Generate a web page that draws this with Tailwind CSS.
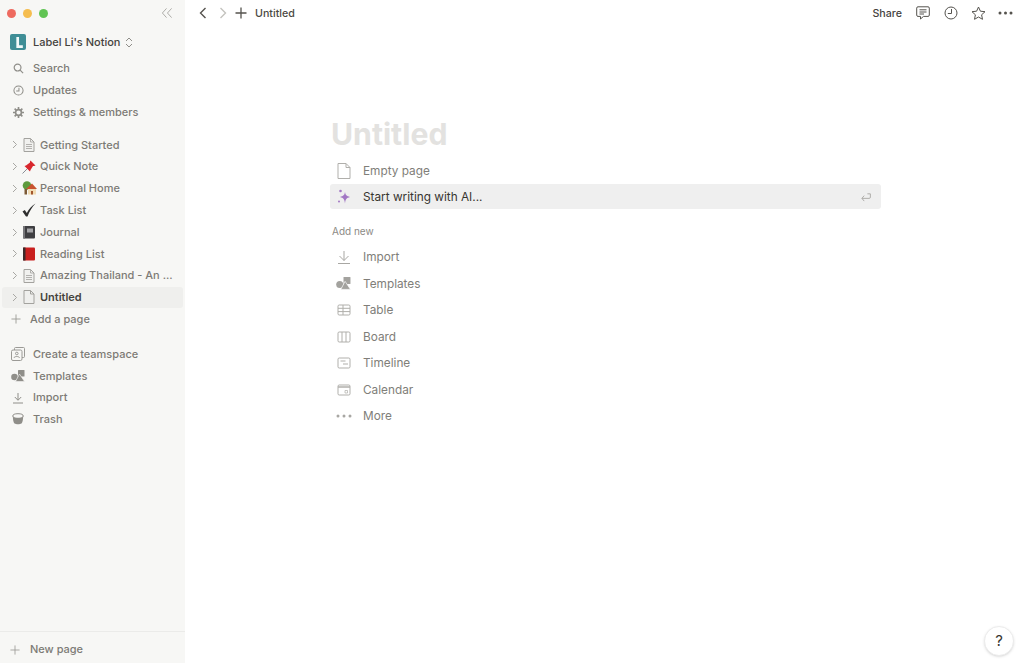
<!DOCTYPE html>
<html><head><meta charset="utf-8"><script src="https://cdn.jsdelivr.net/npm/@tailwindcss/browser@4"></script></head>
<body class="w-[1024px] h-[663px] overflow-hidden bg-white font-['Inter','Liberation_Sans',sans-serif]">
<div class="flex h-[663px] relative">
<aside class="w-[185px] shrink-0 h-full bg-[#f7f7f5] flex flex-col text-[11px] text-[#7d7b75] font-medium">
  <div class="h-[26px] flex items-center pl-[7px] pr-[12px]">
    <span class="w-[9px] h-[9px] rounded-full bg-[#ee6a5f]"></span>
    <span class="w-[9px] h-[9px] rounded-full bg-[#f5bd4f] ml-[7px]"></span>
    <span class="w-[9px] h-[9px] rounded-full bg-[#61c454] ml-[7px]"></span>
    <svg class="ml-auto" width="12" height="12" viewBox="0 0 13 12" fill="none" stroke="#a8a7a3" stroke-width="1"><path d="M6 1 1.500 6 6 11M11.500 1 7 6l4.500 5"/></svg>
  </div>
  <div class="h-[32px] flex items-center pl-[10px] text-[#37352f]">
    <span class="w-[16px] h-[16px] rounded-[2px] bg-[#3f8e96] flex items-center justify-center"><svg width="11" height="13" viewBox="0 0 10 12"><path d="M3 1h2.500v7.500H9V11H3z" fill="#f2fafa"/></svg></span>
    <span class="ml-[7px] text-[11px] font-medium text-[#45433e]">Label Li's Notion</span>
    <svg class="ml-[5px]" width="8" height="11" viewBox="0 0 8 11" fill="none" stroke="#8f8e89"><path d="M1 4l3-3 3 3M1 7l3 3 3-3"/></svg>
  </div>
  <div class="flex flex-col mt-[-1px]">
    <div class="h-[22px] flex items-center pl-[13px] gap-[9px]"><svg class="w-[11px]" height="11" viewBox="0 0 12 12" fill="none" stroke="#8f8e89" stroke-width="1.300"><circle cx="5" cy="5" r="3.700"/><path d="M7.800 7.800 11 11"/></svg><span>Search</span></div>
    <div class="h-[22px] flex items-center pl-[13px] gap-[9px]"><svg class="w-[11px]" height="11" viewBox="0 0 12 12" fill="none" stroke="#8f8e89" stroke-width="1.100"><circle cx="6" cy="6" r="5"/><path d="M6.500 3v3.500H3.500"/></svg><span>Updates</span></div>
    <div class="h-[22px] flex items-center pl-[13px] gap-[9px]"><svg class="w-[11px]" height="11" viewBox="0 0 12 12" fill="none" stroke="#8f8e89"><circle cx="6" cy="6" r="3.200" stroke-width="1.800"/><path stroke-width="1.800" d="M6 0v2.500M6 9.500V12M0 6h2.500M9.500 6H12M1.800 1.800l1.800 1.800M8.400 8.400l1.800 1.800M1.800 10.200l1.800-1.800M8.400 3.600l1.800-1.800"/></svg><span>Settings &amp; members</span></div>
  </div>
  <div class="flex flex-col mt-[11px] px-[2px]">
    <div class="h-[21.800px] flex items-center pl-[10px]"><svg width="6" height="9" viewBox="0 0 6 9" fill="none" stroke="#a8a7a3"><path d="M1 1l3.500 3.500L1 8"/></svg><svg class="ml-[5px]" width="12" height="14" viewBox="0 0 12 14" fill="#f1f1ef" stroke="#a3a29e"><path d="M1 .5h6.500L11 4v9.500H1z"/><path d="M7.500.5V4H11M3 6.500h6M3 8.500h6M3 10.500h6" fill="none" stroke-width=".8"/></svg><span class="ml-[5px]">Getting Started</span></div>
    <div class="h-[21.800px] flex items-center pl-[10px]"><svg width="6" height="9" viewBox="0 0 6 9" fill="none" stroke="#a8a7a3"><path d="M1 1l3.500 3.500L1 8"/></svg><svg class="ml-[4px]" width="14" height="14" viewBox="0 0 14 14"><path d="M.5 13.500 6 8" stroke="#8a8f96" stroke-width="1"/><path d="M8.500 .5l5 5-1.500.6-1 0L8.500 10 8 11.500 2.500 6 4 5.500 8 2.500l0-1z" fill="#d8272d"/></svg><span class="ml-[4px]">Quick Note</span></div>
    <div class="h-[21.800px] flex items-center pl-[10px]"><svg width="6" height="9" viewBox="0 0 6 9" fill="none" stroke="#a8a7a3"><path d="M1 1l3.500 3.500L1 8"/></svg><svg class="ml-[4px]" width="15" height="14" viewBox="0 0 15 14"><circle cx="5" cy="4.500" r="4.300" fill="#5d9a3c"/><rect x="2.500" y="8" width="2.500" height="5.500" fill="#7c5a36"/><rect x="6" y="7" width="8" height="6.500" fill="#f1dcb5"/><path d="M4 8l6-5.500L15 8z" fill="#c8532f"/><rect x="9" y="10" width="2" height="3.500" fill="#a3562d"/></svg><span class="ml-[3px]">Personal Home</span></div>
    <div class="h-[21.800px] flex items-center pl-[10px]"><svg width="6" height="9" viewBox="0 0 6 9" fill="none" stroke="#a8a7a3"><path d="M1 1l3.500 3.500L1 8"/></svg><svg class="ml-[4px]" width="14" height="14" viewBox="0 0 14 14"><path d="M.5 8.500 2.800 7 4.800 10C6.800 6 9.500 3 13.500 .5 10 4 7.500 8.500 5.500 13.500H4z" fill="#2e2e2e"/></svg><span class="ml-[4px]">Task List</span></div>
    <div class="h-[21.800px] flex items-center pl-[10px]"><svg width="6" height="9" viewBox="0 0 6 9" fill="none" stroke="#a8a7a3"><path d="M1 1l3.500 3.500L1 8"/></svg><svg class="ml-[4px]" width="14" height="14" viewBox="0 0 14 14"><rect x="1" y="1" width="12" height="12.500" rx="1" fill="#3f3f42"/><rect x="1" y="1" width="2" height="12.500" fill="#77777a"/><rect x="5" y="3.500" width="6" height="4" fill="#a5a5a8"/></svg><span class="ml-[4px]">Journal</span></div>
    <div class="h-[21.800px] flex items-center pl-[10px]"><svg width="6" height="9" viewBox="0 0 6 9" fill="none" stroke="#a8a7a3"><path d="M1 1l3.500 3.500L1 8"/></svg><svg class="ml-[4px]" width="14" height="14" viewBox="0 0 14 14"><rect x="1" y=".5" width="12" height="13" rx="1" fill="#c9201f"/><rect x="1" y=".5" width="2.500" height="13" fill="#3b2a2a"/></svg><span class="ml-[4px]">Reading List</span></div>
    <div class="h-[21.800px] flex items-center pl-[10px]"><svg width="6" height="9" viewBox="0 0 6 9" fill="none" stroke="#a8a7a3"><path d="M1 1l3.500 3.500L1 8"/></svg><svg class="ml-[5px]" width="12" height="14" viewBox="0 0 12 14" fill="#f1f1ef" stroke="#a3a29e"><path d="M1 .5h6.500L11 4v9.500H1z"/><path d="M7.500.5V4H11M3 6.500h6M3 8.500h6M3 10.500h6" fill="none" stroke-width=".8"/></svg><span class="ml-[5px]">Amazing Thailand - An ...</span></div>
    <div class="h-[21.800px] flex items-center pl-[10px] bg-[#efefed] rounded-[3px] text-[#45433e] font-semibold"><svg width="6" height="9" viewBox="0 0 6 9" fill="none" stroke="#a8a7a3"><path d="M1 1l3.500 3.500L1 8"/></svg><svg class="ml-[5px]" width="12" height="14" viewBox="0 0 12 14" fill="none" stroke="#a3a29e"><path d="M1 .5h6.500L11 4v9.500H1zM7.500.5V4H11"/></svg><span class="ml-[5px]">Untitled</span></div>
    <div class="h-[21.800px] flex items-center pl-[9px]"><svg width="10" height="10" viewBox="0 0 11 11" stroke="#9b9a96"><path d="M5.500 .5v10M.5 5.500h10"/></svg><span class="ml-[9px]">Add a page</span></div>
  </div>
  <div class="flex flex-col mt-[13px]">
    <div class="h-[21.800px] flex items-center pl-[11px] gap-[8px]"><svg class="w-[14px]" height="14" viewBox="0 0 14 14" fill="none" stroke="#9b9a96"><rect x=".5" y="3" width="10.500" height="10.500" rx="1.500"/><path d="M3.500 3V1.500a1 1 0 0 1 1-1h8a1 1 0 0 1 1 1v8a1 1 0 0 1-1 1H11"/><circle cx="5.800" cy="6.500" r="1.300"/><path d="M3 11c0-2 5.500-2 5.500 0"/></svg><span>Create a teamspace</span></div>
    <div class="h-[21.800px] flex items-center pl-[11px] gap-[8px]"><svg class="w-[14px]" height="12" viewBox="0 0 14 12" fill="#8f8e89"><circle cx="3.500" cy="7" r="3.300"/><rect x="7" y="0" width="6.500" height="6.500" rx=".5"/><path d="M8.500 4 13.500 11.500H4.500z" stroke="#f7f7f5" stroke-width=".6"/></svg><span>Templates</span></div>
    <div class="h-[21.800px] flex items-center pl-[12px] gap-[9px]"><svg class="w-[12px]" height="12" viewBox="0 0 12 12" fill="none" stroke="#8f8e89"><path d="M6 1v7M2.800 5 6 8.300 9.200 5M1 11h10"/></svg><span>Import</span></div>
    <div class="h-[21.800px] flex items-center pl-[12px] gap-[9px]"><svg class="w-[12px]" height="12" viewBox="0 0 12 12"><ellipse cx="6" cy="3" rx="5.200" ry="2.300" fill="none" stroke="#8f8e89"/><path d="M.8 3.500C1 7 1.500 9.500 2.500 10.500c1.500 1 5.500 1 7 0 1-1 1.500-3.500 1.700-7-1 2-9.400 2-10.400 0z" fill="#8f8e89"/></svg><span>Trash</span></div>
  </div>
  <div class="mt-auto h-[32px] pt-[4px] border-t border-[#ebebe9] flex items-center pl-[10px]"><svg width="10" height="10" viewBox="0 0 12 12" stroke="#9b9a96"><path d="M6 .5v11M.5 6h11"/></svg><span class="ml-[10px]">New page</span></div>
</aside>
<main class="flex-1 flex flex-col min-w-0">
  <header class="h-[26px] flex items-center pl-[14px] pr-[11px] text-[10.700px] font-medium text-[#37352f] [&_span]:pt-[2px]">
    <svg width="8" height="12" viewBox="0 0 8 12" fill="none" stroke="#55534e" stroke-width="1.400"><path d="M6.500 1 1.500 6l5 5"/></svg>
    <svg class="ml-[12px]" width="8" height="12" viewBox="0 0 8 12" fill="none" stroke="#c4c3bf" stroke-width="1.400"><path d="M1.500 1l5 5-5 5"/></svg>
    <svg class="ml-[8px]" width="12" height="12" viewBox="0 0 12 12" stroke="#55534e" stroke-width="1.300"><path d="M6 .5v11M.5 6h11"/></svg>
    <span class="ml-[8px] text-[#4b4943]">Untitled</span>
    <span class="ml-auto text-[#45433e]">Share</span>
    <svg class="ml-[14px]" width="14" height="14" viewBox="0 0 14 14" fill="none" stroke="#55534e"><path d="M2 .8h10a1.300 1.300 0 0 1 1.300 1.300v7a1.300 1.300 0 0 1-1.300 1.300H7.500L4.500 13v-2.600H2A1.300 1.300 0 0 1 .7 9.100v-7A1.300 1.300 0 0 1 2 .8zM3.500 3.800h7M3.500 6h7M3.500 8h4.500"/></svg>
    <svg class="ml-[14px]" width="14" height="14" viewBox="0 0 14 14" fill="none" stroke="#55534e"><circle cx="7" cy="7" r="6"/><path d="M7.500 3v4.500H3.800"/></svg>
    <svg class="ml-[13px]" width="15" height="14" viewBox="0 0 15 14" fill="none" stroke="#55534e"><path d="M7.500 1l1.900 4.200 4.600.5-3.400 3.100.9 4.500-4-2.300-4 2.300.9-4.500L1 5.700l4.600-.5z"/></svg>
    <svg class="ml-[12px]" width="15" height="4" viewBox="0 0 15 4" fill="#55534e"><circle cx="2" cy="2" r="1.500"/><circle cx="7.500" cy="2" r="1.500"/><circle cx="13" cy="2" r="1.500"/></svg>
  </header>
  <section class="w-[551px] ml-[145px] mt-[90px] text-[11.800px] text-[#807e79] [&_span]:pt-[2px]">
    <h1 class="pl-[1px] text-[30.200px] leading-[36px] font-bold text-[#e3e2e0]">Untitled</h1>
    <div class="mt-[6px] h-[26px] flex items-center pl-[7px]"><svg class="w-[14px]" height="16" viewBox="0 0 14 16" fill="none" stroke="#b0afab"><path d="M1 .5h8L13 4.500V15.500H1zM9 .5v4h4"/></svg><span class="ml-[12px]">Empty page</span></div>
    <div class="h-[25px] flex items-center pl-[7px] pr-[10px] bg-[#efefef] rounded-[3px] text-[#37352f]"><svg class="w-[14px]" height="15" viewBox="0 0 14 15" fill="#a277c4"><path d="M8 3c.5 3 1.500 4 5 5C9.500 9 8.500 10 8 14.500 7.500 10 6.500 9 3 8 6.500 7 7.500 6 8 3z"/><circle cx="3.500" cy="2" r="1.300"/><circle cx="2" cy="12.500" r="1"/></svg><span class="ml-[12px]">Start writing with AI...</span><svg class="ml-auto" width="10" height="10" viewBox="0 0 11 10" fill="none" stroke="#a8a7a3"><path d="M3.500 3.500 1 6.500 3.500 9.500M1 6.500h8a1.300 1.300 0 0 0 1.300-1.300V1.500H7"/></svg></div>
    <div class="mt-[13px] h-[18px] pl-[2px] flex items-center text-[10px] text-[#8c8a85]">Add new</div>
    <div class="mt-[3.750px] h-[26.500px] flex items-center pl-[7px]"><svg class="w-[14px]" height="14" viewBox="0 0 14 14" fill="none" stroke="#a8a7a3"><path d="M7 1v9.500M2.500 6 7 10.500 11.500 6M1 13.500h12"/></svg><span class="ml-[12px]">Import</span></div>
    <div class="h-[26.500px] flex items-center pl-[6px]"><svg class="w-[15px]" height="13" viewBox="0 0 14 12" fill="#a3a29e"><circle cx="3.500" cy="7" r="3.300"/><rect x="7" y="0" width="6.500" height="6.500" rx=".5"/><path d="M8.500 4 13.500 11.500H4.500z" stroke="#fff" stroke-width=".6"/></svg><span class="ml-[12px]">Templates</span></div>
    <div class="h-[26.500px] flex items-center pl-[7px]"><svg class="w-[14px]" height="12" viewBox="0 0 14 12" fill="none" stroke="#b0afab"><rect x="1" y="1" width="12" height="10" rx="1.200"/><path d="M1 4.300h12M1 7.600h12M6 1v10"/></svg><span class="ml-[12px]">Table</span></div>
    <div class="h-[26.500px] flex items-center pl-[7px]"><svg class="w-[14px]" height="12" viewBox="0 0 14 12" fill="none" stroke="#b0afab"><rect x="1" y="1" width="12" height="10" rx="1.200"/><path d="M5 1v10M9 1v10"/></svg><span class="ml-[12px]">Board</span></div>
    <div class="h-[26.500px] flex items-center pl-[7px]"><svg class="w-[14px]" height="12" viewBox="0 0 14 12" fill="none" stroke="#b0afab"><rect x="1" y="1" width="12" height="10" rx="1.200"/><path d="M3.500 4h5M6 7h5"/></svg><span class="ml-[12px]">Timeline</span></div>
    <div class="h-[26.500px] flex items-center pl-[7px]"><svg class="w-[14px]" height="12" viewBox="0 0 14 12" fill="none" stroke="#b0afab"><rect x="1" y="1" width="12" height="10" rx="1.200"/><path d="M1 3h12" stroke-width="1.500"/><path d="M8 6.500h2.500V9H8z" stroke-width=".7"/></svg><span class="ml-[12px]">Calendar</span></div>
    <div class="h-[26.500px] flex items-center pl-[6px]"><svg class="w-[16px]" height="4" viewBox="0 0 16 4" fill="#a8a7a3"><circle cx="2" cy="2" r="1.500"/><circle cx="8" cy="2" r="1.500"/><circle cx="14" cy="2" r="1.500"/></svg><span class="ml-[11px]">More</span></div>
  </section>
</main>
<div class="absolute left-[984px] top-[626px] w-[30px] h-[30px] rounded-full bg-white border border-[#ececec] shadow-sm flex items-center justify-center text-[15px] text-[#37352f]">?</div>
</div>
</body></html>
